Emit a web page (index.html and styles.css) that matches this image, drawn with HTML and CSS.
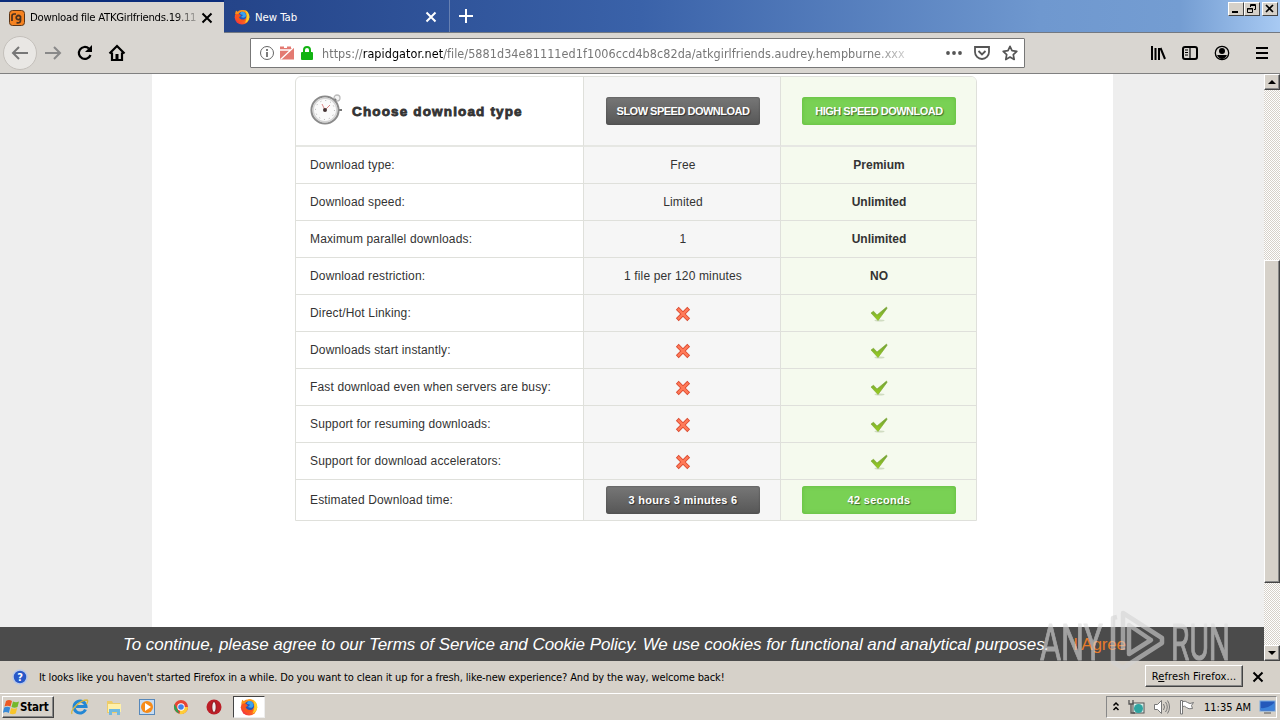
FILE: index.html
```
<!DOCTYPE html>
<html lang="en">
<head>
    <meta charset="UTF-8">
    <title>Download file</title>
    <link rel="stylesheet" href="styles.css">
</head>
<body>
    <!-- Shared icons -->
    <svg class="defs" width="0" height="0">
        <defs>
            <linearGradient id="green" x1="0" y1="0" x2="0" y2="1"><stop offset="0" stop-color="#6f9f3c"/><stop offset="1" stop-color="#9bd01c"/></linearGradient>
            <linearGradient id="fire" x1="0" y1="1" x2="1" y2="0"><stop offset="0" stop-color="#ef1c4d"/><stop offset=".5" stop-color="#ff7417"/><stop offset="1" stop-color="#ffe037"/></linearGradient>
            <symbol id="no" viewBox="0 0 16 16"><path d="M3.700 3.700l8.600 8.600M12.300 3.700l-8.600 8.600" stroke="#d9482f" stroke-width="4" stroke-linecap="square"/><path d="M3.700 3.700l8.600 8.600M12.300 3.700l-8.600 8.600" stroke="#ff7a58" stroke-width="2.400" stroke-linecap="square"/></symbol>
            <symbol id="yes" viewBox="0 0 18 16"><ellipse cx="9.500" cy="14.600" rx="5" ry="1" fill="#d0dcc2"/><path d="M1 7l2.500-1.800 3.500 3.800L16.600 1 17 2.400 8 14.500z" fill="url(#green)" stroke="#7ba52c" stroke-width=".6"/></symbol>
            <symbol id="firefox" viewBox="0 0 16 16"><circle cx="8" cy="8.300" r="7.300" fill="url(#fire)"/><path d="M1 5L2 1.500 4.500 3.500 8 1c4 0 5.500 2 6 5l-3-2z" fill="#ff9516"/><circle cx="8.300" cy="7" r="4.200" fill="#2455bb"/><path d="M7 3c3-1 5 1 5 4-1 2-3 2-5 1l2-2-3-1z" fill="#3aa2ed"/><path d="M2 6c2-2 4-1 5 1L5 8c1 3 4 3 7 2-2 4-8 4-10-1z" fill="#f9541c"/><path d="M11 1c4 2 5 6 4 9-1 2-2 3-4 4 2-4 3-8 0-13z" fill="#ffcf28"/></symbol>
            <symbol id="close" viewBox="0 0 12 12"><path d="M1.500 1.500l9 9M10.500 1.500l-9 9" stroke="currentColor" stroke-width="2"/></symbol>
        </defs>
    </svg>

    <header class="tabs">
        <div class="tab active">
            <svg width="16" height="16" viewBox="0 0 16 16"><rect x=".5" y=".5" width="15" height="15" rx="3" fill="#f58220" stroke="#5b3415"/><path d="M3 11V6q0-2 2-2h2M8.500 9.500q-2-1-1-3 2-2 4 0v4q0 3-4 2.200M11.500 7q0 3-3 2.500" fill="none" stroke="#49301e" stroke-width="1.700"/></svg>
            <span class="tab-title">Download file ATKGirlfriends.19.11</span>
            <svg class="tab-close" width="12" height="12"><use href="#close"/></svg>
        </div>
        <div class="tab">
            <svg width="16" height="16"><use href="#firefox"/></svg>
            <span class="tab-title">New Tab</span>
            <svg class="tab-close" width="12" height="12"><use href="#close"/></svg>
        </div>
        <svg class="plus" width="16" height="16" viewBox="0 0 16 16"><path d="M8 1v14M1 8h14" stroke="#fff" stroke-width="2"/></svg>
        <div class="window-buttons">
            <span><svg width="12" height="10"><path d="M2 8h6" stroke="#000" stroke-width="2"/></svg></span>
            <span><svg width="12" height="10" fill="none" stroke="#000"><path d="M4.500 3V.5h5v5H8M4 1.500h6M1.500 4.500h5v4h-5zM1 5h6"/></svg></span>
            <span class="last"><svg width="12" height="10"><path d="M2 1l7 7M9 1L2 8" stroke="#000" stroke-width="1.700"/></svg></span>
        </div>
    </header>

    <nav class="toolbar">
        <div class="nav-icons">
            <span class="back"><svg width="18" height="18" viewBox="0 0 18 18" fill="none" stroke="#777" stroke-width="2"><path d="M17 9H2M8 3L2 9l6 6"/></svg></span>
            <svg width="18" height="18" viewBox="0 0 18 18" fill="none" stroke="#898989" stroke-width="2"><path d="M1 9h15M10 3l6 6-6 6"/></svg>
            <svg width="18" height="18" viewBox="0 0 18 18" fill="none" stroke="#000" stroke-width="2.200"><path d="M14.500 11a6 6 0 1 1-1.600-6.500"/><path d="M16 1v7H9z" fill="#000" stroke="none"/></svg>
            <svg width="18" height="18" viewBox="0 0 18 18"><path d="M1.500 9.500L9 2l7.500 7.500M4 8.500V16h10V8.500" fill="none" stroke="#000" stroke-width="2.200"/><path d="M7.500 10h3v6h-3z"/></svg>
        </div>
        <div class="url-bar">
            <svg width="16" height="16" viewBox="0 0 16 16" fill="none" stroke="#666"><circle cx="8" cy="8" r="6.500"/><path d="M8 7v5M8 4v2" stroke-width="1.700"/></svg>
            <svg width="16" height="16" viewBox="0 0 16 16"><path d="M1 4V1.500h4V3h3V1.500h4V3h3v11.500H1z" fill="#e37a72"/><path d="M1.500 14.500L15 2M1 5h11" stroke="#fff" stroke-width="1.300"/></svg>
            <svg width="16" height="16" viewBox="0 0 16 16"><path d="M5 8V5a3 3 0 0 1 6 0v3" fill="none" stroke="#12b312" stroke-width="2"/><rect x="2" y="7" width="12" height="8" rx="1" fill="#12b312"/></svg>
            <div class="url">https://<b>rapidgator.net</b>/file/5881d34e81111ed1f1006ccd4b8c82da/atkgirlfriends.audrey.hempburne.xxx</div>
            <svg width="18" height="16" viewBox="0 0 18 16" fill="#555"><circle cx="3" cy="8" r="1.900"/><circle cx="9" cy="8" r="1.900"/><circle cx="15" cy="8" r="1.900"/></svg>
            <svg class="pocket" width="16" height="16" viewBox="0 0 16 16" fill="none" stroke="#555" stroke-width="1.800"><path d="M1 2h14v5a7 7 0 0 1-14 0zM4.500 6L8 9.500 11.500 6"/></svg>
            <svg class="star" width="16" height="16" viewBox="0 0 16 16" fill="none" stroke="#555" stroke-width="1.700" stroke-linejoin="round"><path d="M8 1.300l2 4.400 4.800.6-3.500 3.300.9 4.900L8 12.100l-4.200 2.400.9-4.900L1.200 6.300 6 5.700z"/></svg>
        </div>
        <div class="tools">
            <svg width="16" height="16" viewBox="0 0 16 16" stroke="#000" stroke-width="2"><path d="M2 1v14M5.500 3v12M9 3v12M10.500 3L15 14"/></svg>
            <svg width="16" height="16" viewBox="0 0 16 16" fill="none" stroke="#000"><rect x="1" y="2" width="14" height="12" rx="2" stroke-width="2"/><path d="M8 2v12M3 5h3M3 7.500h3M3 10h3" stroke-width="1.200"/></svg>
            <svg width="16" height="16" viewBox="0 0 16 16"><circle cx="8" cy="8" r="6.700" fill="none" stroke="#000" stroke-width="1.300"/><circle cx="8" cy="6" r="3"/><path d="M3 10h10q-2 4-5 4t-5-4"/></svg>
            <svg class="menu" width="14" height="16" viewBox="0 0 14 16" stroke="#000" stroke-width="2"><path d="M1 3h12M1 8h12M1 13h12"/></svg>
        </div>
    </nav>

    <main class="viewport">
        <div class="page">
            <div class="compare">
                <div class="row head">
                    <div class="label">
                        <svg width="34" height="34" viewBox="0 0 34 34"><circle cx="27" cy="5" r="3" fill="#f4f4f4" stroke="#bbb" stroke-width="1.300"/><path d="M23 9l3-3M29 17h3" stroke="#777" stroke-width="2"/><circle cx="15" cy="17" r="13.500" fill="#fafafa" stroke="#8a8a8a" stroke-width="2.200"/><circle cx="15" cy="17" r="11.800" fill="none" stroke="#d3d3d3" stroke-width="1.600"/><circle cx="15" cy="17" r="9.500" fill="none" stroke="#aaa" stroke-dasharray="1 3.970"/><path d="M12 11l3 6 5-5" fill="none" stroke="#d88" stroke-width="1"/><circle cx="15" cy="17" r="2" fill="#433"/></svg>
                        <h2>Choose download type</h2>
                    </div>
                    <div class="slow"><a class="button gray">SLOW SPEED DOWNLOAD</a></div>
                    <div class="high"><a class="button lime">HIGH SPEED DOWNLOAD</a></div>
                </div>
                <div class="row"><div class="label">Download type:</div><div class="slow">Free</div><div class="high">Premium</div></div>
                <div class="row"><div class="label">Download speed:</div><div class="slow">Limited</div><div class="high">Unlimited</div></div>
                <div class="row"><div class="label">Maximum parallel downloads:</div><div class="slow">1</div><div class="high">Unlimited</div></div>
                <div class="row"><div class="label">Download restriction:</div><div class="slow">1 file per 120 minutes</div><div class="high">NO</div></div>
                <div class="row"><div class="label">Direct/Hot Linking:</div><div class="slow"><svg class="mark"><use href="#no"/></svg></div><div class="high"><svg class="mark"><use href="#yes"/></svg></div></div>
                <div class="row"><div class="label">Downloads start instantly:</div><div class="slow"><svg class="mark"><use href="#no"/></svg></div><div class="high"><svg class="mark"><use href="#yes"/></svg></div></div>
                <div class="row"><div class="label">Fast download even when servers are busy:</div><div class="slow"><svg class="mark"><use href="#no"/></svg></div><div class="high"><svg class="mark"><use href="#yes"/></svg></div></div>
                <div class="row"><div class="label">Support for resuming downloads:</div><div class="slow"><svg class="mark"><use href="#no"/></svg></div><div class="high"><svg class="mark"><use href="#yes"/></svg></div></div>
                <div class="row"><div class="label">Support for download accelerators:</div><div class="slow"><svg class="mark"><use href="#no"/></svg></div><div class="high"><svg class="mark"><use href="#yes"/></svg></div></div>
                <div class="row time"><div class="label">Estimated Download time:</div><div class="slow"><a class="button gray">3 hours 3 minutes 6</a></div><div class="high"><a class="button lime">42 seconds</a></div></div>
            </div>
        </div>
        <div class="scrollbar">
            <span class="arrow"><svg width="8" height="4"><path d="M4 0l4 4H0z"/></svg></span>
            <span class="thumb"></span>
            <span class="arrow down"><svg width="8" height="4"><path d="M0 0h8L4 4z"/></svg></span>
        </div>
        <div class="cookies"><em>To continue, please agree to our Terms of Service and Cookie Policy. We use cookies for functional and analytical purposes.</em><a>I Agree</a></div>
    </main>

    <div class="notice">
        <svg width="16" height="16" viewBox="0 0 16 16"><circle cx="8" cy="8" r="7" fill="#2858c8" stroke="#b9c9e8" stroke-width="1.500"/><text class="question" x="8" y="12" text-anchor="middle">?</text></svg>
        <span class="notice-text">It looks like you haven't started Firefox in a while. Do you want to clean it up for a fresh, like-new experience? And by the way, welcome back!</span>
        <button class="refresh">R<u>e</u>fresh Firefox...</button>
        <svg class="notice-close" width="12" height="12"><use href="#close"/></svg>
    </div>

    <footer class="taskbar">
        <div class="start">
            <svg width="17" height="16" viewBox="0 0 17 16"><path d="M3 2q3-2 6 0L7.500 7.500q-3-1.500-6 0z" fill="#ed5a24"/><path d="M10 2.500q3 1.500 6 0l-1.500 5.500q-3 1.500-6 0z" fill="#75b82b"/><path d="M1.200 8.500q3-1.500 6 0L5.800 14q-3-2-6 0z" fill="#398ad7"/><path d="M8.200 9q3 1.500 6 0l-1.500 5.500q-3 1.500-6 0z" fill="#f8c52b"/></svg>
            Start
        </div>
        <div class="launch">
            <svg width="18" height="18" viewBox="0 0 18 18"><path d="M14.500 11.500A6 6 0 1 1 15 8.500H5" fill="none" stroke="#2387d4" stroke-width="3"/><path d="M1 16C-1 12 9 2 16 2c1 0 1 2-.5 4" fill="none" stroke="#d9b943" stroke-width="1.300"/></svg>
            <svg width="18" height="18" viewBox="0 0 18 18"><path d="M2 3h5l1 2h7v10H2z" fill="#edcc69"/><path d="M3 6h13v8H3z" fill="#fff0a9"/><path d="M4 17v-6h11v6h-3v-3H7v3z" fill="#70b9df"/></svg>
            <svg width="18" height="18" viewBox="0 0 18 18"><rect x="1.500" y="1.500" width="15" height="15" fill="#c7dcf2" stroke="#5788ba"/><circle cx="9" cy="9" r="6" fill="#f78b18"/><path d="M7 5l6 4-6 4z" fill="#fff"/></svg>
            <svg width="18" height="18" viewBox="0 0 18 18"><circle cx="9" cy="9" r="7" fill="#e54534"/><path d="M2.500 6l5 9.500A7 7 0 0 1 2.500 6" fill="#2ba351"/><path d="M9 9h7a7 7 0 0 1-8.500 7z" fill="#ffcd37"/><circle cx="9" cy="9" r="3.700" fill="#fff"/><circle cx="9" cy="9" r="2.800" fill="#3f83ea"/></svg>
            <svg width="18" height="18" viewBox="0 0 18 18"><circle cx="9" cy="9" r="7.500" fill="#bc1e27"/><ellipse cx="9" cy="9" rx="2.200" ry="5.500" fill="#eee" stroke="#8b1017"/></svg>
        </div>
        <div class="running"><svg width="18" height="18"><use href="#firefox"/></svg></div>
        <div class="tray">
            <svg width="8" height="12" viewBox="0 0 8 12" fill="none" stroke="#000" stroke-width="1.500"><path d="M1.500 4.500L4 2l2.500 2.500M1.500 9L4 6.500 6.500 9"/></svg>
            <svg width="17" height="16" viewBox="0 0 17 16"><rect x="5" y="4" width="11" height="10" fill="#d8eee9" stroke="#555"/><circle cx="10.500" cy="9.500" r="4.500" fill="#2fa4a0"/><path d="M1 1v4h4V1M3 5v9h4" fill="none" stroke="#555" stroke-width="1.300"/></svg>
            <svg width="17" height="16" viewBox="0 0 17 16" fill="none" stroke="#777"><path d="M1.500 5.500h3l4-4v13l-4-4h-3z" fill="#fff"/><path d="M10.500 5q2 3 0 6M12.500 3q3.500 5 0 10M14.500 1.500q4 6.500 0 13"/></svg>
            <svg width="17" height="16" viewBox="0 0 17 16" fill="#fff" stroke="#777"><path d="M2.500 15V1.500h2V15zM4.500 2.500q3-1 5 1t6 0l-2 3 1 3q-4 1-6-1t-4-1z"/></svg>
            <span class="clock">11:35 AM</span>
            <svg width="17" height="14" viewBox="0 0 17 14"><rect x="1" y="1" width="15" height="10" fill="#2459ba" stroke="#74a9e1"/><path d="M2 8q7 1 13-5v7H2z" fill="#3c83da"/><path d="M5 13h7" stroke="#555"/></svg>
        </div>
    </footer>

    <svg class="watermark" width="194" height="64" viewBox="0 0 194 64">
        <g class="brand"><text x="1" y="52" textLength="63" lengthAdjust="spacingAndGlyphs">ANY</text><text x="132" y="52" textLength="59" lengthAdjust="spacingAndGlyphs">RUN</text></g>
        <path d="M84 42V5l39 25v5L84 60l-10-6V10l4-1M90 17v29l22-14z"/>
    </svg>
</body>
</html>
```
FILE: styles.css
```
* {
    box-sizing: border-box;
}

body {
    margin: 0;
    width: 1280px;
    height: 720px;
    overflow: hidden;
    display: flex;
    flex-direction: column;
    position: relative;
    font-family: "DejaVu Sans Condensed", "DejaVu Sans", sans-serif;
    font-size: 11px;
    color: #000;
    background: #d6d1c9;
}

svg {
    flex-shrink: 0;
}

.defs {
    position: absolute;
}

.tabs {
    height: 33px;
    flex-shrink: 0;
    display: flex;
    background: linear-gradient(90deg, #183b85 0, #25458a 240px, #3a62a9 640px, #6f98cf 1040px, #749dd2 1180px, #a8caf3 1280px);
    border-bottom: 1px solid #737982;
}

.tab {
    width: 226px;
    display: flex;
    align-items: center;
    padding: 2px 12px 0 10px;
    color: #fff;
    border-right: 1px solid #6680b2;
}

.tab.active {
    width: 224px;
    height: 33px;
    padding-left: 9px;
    padding-right: 11px;
    color: #000;
    background: #d9d6d1;
    border-top: 2px solid #0b2d7b;
    border-right: 0;
    padding-top: 0;
}

.tab-title {
    flex: 1;
    margin: 0 4px 0 5px;
    white-space: nowrap;
    font-size: 11.3px;
    letter-spacing: -0.05px;
}

.active .tab-title {
    margin-right: 4px;
    letter-spacing: -0.3px;
    -webkit-mask-image: linear-gradient(90deg, #000 145px, transparent 172px);
}

.plus {
    margin: 8px 0 0 8px;
}

.window-buttons {
    margin: 2px 2px 0 auto;
    display: flex;
}

.window-buttons span {
    width: 16px;
    height: 14px;
    padding: 1px;
    line-height: 0;
    background: #d6d1c9;
    border: 1px solid;
    border-color: #fff #444 #444 #fff;
}

.window-buttons .last {
    margin-left: 2px;
}

.toolbar {
    height: 41px;
    flex-shrink: 0;
    display: flex;
    align-items: center;
    background: #d9d6d1;
    border-bottom: 1px solid #808080;
}

.nav-icons {
    width: 250px;
    display: flex;
    align-items: center;
    gap: 14px;
    padding-left: 3px;
}

.back {
    width: 34px;
    height: 34px;
    margin-right: -7px;
    display: flex;
    align-items: center;
    justify-content: center;
    background: #e9e7e4;
    border: 1px solid #c4c0bb;
    border-radius: 50%;
}

.url-bar {
    width: 775px;
    height: 30px;
    display: flex;
    align-items: center;
    gap: 4px;
    padding: 0 6px 0 8px;
    background: #fff;
    border: 1px solid #777;
    border-radius: 1px;
}

.url {
    width: 592px;
    margin-left: 3px;
    margin-right: 27px;
    white-space: nowrap;
    font-size: 12.5px;
    color: #777;
    letter-spacing: 0.05px;
    -webkit-mask-image: linear-gradient(90deg, #000 550px, transparent 600px);
}

.url b {
    font-weight: normal;
    color: #000;
}

.pocket {
    margin-left: 7px;
}

.star {
    margin-left: 8px;
}

.tools {
    display: flex;
    gap: 16px;
    margin-left: 125px;
}

.menu {
    margin-left: 9px;
}

.viewport {
    height: 587px;
    flex-shrink: 0;
    display: flex;
    position: relative;
    background: #eee;
    font-family: "Liberation Sans", Arial, sans-serif;
}

.page {
    width: 961px;
    margin-left: 152px;
    padding: 2px 0 0 143px;
    background: #fff;
}

.compare {
    width: 682px;
    border: 1px solid #dfe0db;
    border-radius: 6px 6px 0 0;
    overflow: hidden;
    font-size: 12px;
    letter-spacing: 0.15px;
    color: #333;
}

.row {
    height: 37px;
    display: grid;
    grid-template-columns: 287px 197px 196px;
    grid-template-rows: 100%;
    line-height: 36px;
}

.row > div {
    border-bottom: 1px solid #dfe0db;
}

.row.head {
    height: 70px;
}

.row.head > div {
    border-bottom-width: 2px;
    border-bottom-color: #e6e7e3;
}

.row.time {
    height: 40px;
    line-height: 41px;
}

.row.time > div {
    border-bottom: 0;
}

.label {
    padding-left: 14px;
}

.slow,
.high {
    text-align: center;
    border-left: 1px solid #dfe0db;
    background: #f6f6f6;
    padding-left: 2px;
}

.high {
    background: #f5faee;
    font-weight: bold;
    padding-left: 1px;
    letter-spacing: 0;
}

.head .label {
    display: flex;
    align-items: center;
    gap: 8px;
    padding-bottom: 2px;
}

.head h2 {
    margin: 4px 0 0;
    font-size: 13.5px;
    line-height: 20px;
    font-weight: bold;
    letter-spacing: 1.15px;
    -webkit-text-stroke: 0.8px #333;
}

.button {
    display: block;
    width: 154px;
    height: 28px;
    margin: 6px 0 0 20px;
    line-height: 28px;
    text-align: center;
    font-size: 11px;
    font-weight: bold;
    letter-spacing: 0.3px;
    color: #fff;
    border-radius: 3px;
    text-shadow: 1px 1px 1px rgba(0, 0, 0, 0.5);
}

.head .button {
    margin-top: 20px;
    letter-spacing: -0.5px;
}

.gray {
    background: linear-gradient(#777, #565656);
    box-shadow: inset 0 0 2px #444;
}

.lime {
    background: #79d154;
    box-shadow: inset 0 0 4px #62bb3c;
}

.mark {
    display: block;
    width: 18px;
    height: 16px;
    margin: 11px auto 0;
}

.scrollbar {
    width: 16px;
    margin-left: auto;
    display: flex;
    flex-direction: column;
    background: repeating-conic-gradient(#fff 0 25%, #d6d1c9 0 50%) 0 0 / 2px 2px;
}

.arrow,
.thumb {
    height: 16px;
    display: flex;
    align-items: center;
    justify-content: center;
    background: #d6d1c9;
    border: 1px solid;
    border-color: #fff #444 #444 #fff;
    box-shadow: inset -1px -1px #888;
}

.thumb {
    height: 323px;
    margin-top: 170px;
}

.arrow.down {
    margin-top: auto;
}

.cookies {
    position: absolute;
    left: 0;
    bottom: 0;
    width: 1264px;
    height: 34px;
    padding-left: 123px;
    line-height: 36px;
    font-size: 17px;
    letter-spacing: -0.2px;
    white-space: nowrap;
    color: #fff;
    background: #4b4b4b;
}

.cookies a {
    margin-left: 24px;
    color: #e87b2b;
}

.cookies em {
    letter-spacing: -0.06px;
}

.notice {
    height: 32px;
    flex-shrink: 0;
    display: flex;
    align-items: center;
    padding: 0 16px 0 12px;
}

.question {
    fill: #fff;
    font-size: 11px;
    font-weight: bold;
}

.notice-text {
    flex: 1;
    margin-left: 11px;
    white-space: nowrap;
    letter-spacing: -0.135px;
}

.refresh {
    width: 98px;
    height: 22px;
    margin: 0 9px 2px 0;
    padding: 0;
    font: inherit;
    letter-spacing: 0.12px;
    white-space: nowrap;
    background: #d6d1c9;
    border: 1px solid;
    border-color: #fff #444 #444 #fff;
    box-shadow: inset -1px -1px #888;
}

.taskbar {
    height: 27px;
    flex-shrink: 0;
    display: flex;
    align-items: center;
    border-top: 1px solid #fff;
}

.start {
    width: 52px;
    height: 22px;
    margin-left: 2px;
    display: flex;
    align-items: center;
    font-weight: bold;
    font-size: 11.5px;
    letter-spacing: -0.2px;
    border: 1px solid;
    border-color: #fff #444 #444 #fff;
    box-shadow: inset -1px -1px #888;
}

.launch {
    display: flex;
    gap: 15.5px;
    margin-left: 17px;
}

.running {
    width: 32px;
    height: 22px;
    margin-left: 10px;
    display: flex;
    align-items: center;
    justify-content: center;
    background: #fff;
    border: 1px solid;
    border-color: #444 #eee #eee #444;
}

.tray {
    width: 171px;
    height: 22px;
    margin: 0 3px 0 auto;
    padding: 0 0 0 5px;
    display: flex;
    align-items: center;
    gap: 8px;
    border: 1px solid;
    border-color: #888 #fff #fff #888;
}

.clock {
    flex: 1;
    text-align: right;
    white-space: nowrap;
}

.watermark {
    position: absolute;
    left: 1039px;
    top: 608px;
    opacity: 0.6;
    fill: none;
    stroke: #d4d4d4;
    stroke-width: 4.5;
    stroke-linejoin: round;
}

.brand {
    font-family: Roboto, "Liberation Sans", sans-serif;
    font-size: 50px;
    fill: #ddd;
    stroke: #ddd;
    stroke-width: 1;
}
```
